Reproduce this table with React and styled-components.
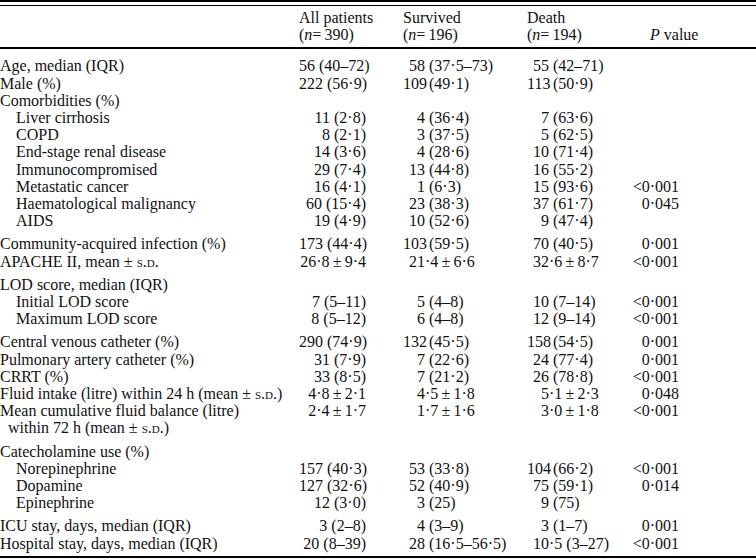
import React from 'react';
import styled, { createGlobalStyle } from 'styled-components';

const GlobalStyle = createGlobalStyle`
  html, body {
    margin: 0;
    padding: 0;
    background: #fff;
  }
  body {
    font-family: 'Liberation Serif', 'Times New Roman', serif;
    color: #111;
  }
`;

const Table = styled.div`
  width: 756px;
  font-size: 16px;
  line-height: 17.2px;
`;

const ThickRule = styled.div`
  height: ${({ $h }) => $h || 2}px;
  background: #000;
`;

const ThinRule = styled.div`
  height: 1px;
  margin-top: 3px;
  background: #000;
`;

const Row = styled.div`
  display: grid;
  grid-template-columns: 299px 67px 161px 102px 61px;
  white-space: nowrap;
`;

const HeaderRow = styled(Row)`
  padding: 3px 0 4px;
`;

const Body = styled.div`
  padding: 8px 0 4.5px;
`;

const Group = styled.div`
  & + & {
    margin-top: 6px;
  }
`;

const Label = styled.div`
  padding-left: ${({ $indent }) => $indent || 0}px;
`;

const HeadCell = styled.div`
  padding-left: ${({ $pad }) => $pad || 0}px;
`;

const RightCell = styled.div`
  text-align: right;
  padding-right: ${({ $pad }) => $pad || 0}px;
`;

const AlignCell = styled.div`
  padding-left: ${({ $pad }) => $pad || 0}px;
`;

const Lead = styled.span`
  display: inline-block;
  width: 22px;
  text-align: right;
`;

const Sc = styled.span`
  font-variant: small-caps;
`;

const It = styled.i`
  font-style: italic;
`;

const txt = (s) => {
  if (!s.includes('s.d.')) return s;
  const parts = s.split('s.d.');
  return parts.map((p, i) => (
    <React.Fragment key={i}>
      {p}
      {i < parts.length - 1 && <Sc>s.d.</Sc>}
    </React.Fragment>
  ));
};

const Aligned = ({ value, pad }) => {
  const m = value.match(/^(\d*)(.*)$/);
  return (
    <AlignCell $pad={pad}>
      <Lead>{m[1]}</Lead>
      {m[2]}
    </AlignCell>
  );
};

// tight plus-minus for the figures
const PM = '\u2009±\u2009';

const groups = [
  [
    ['Age, median (IQR)', 0, '56 (40–72)', '58 (37·5–73)', '55 (42–71)', ''],
    ['Male (%)', 0, '222 (56·9)', '109 (49·1)', '113 (50·9)', ''],
    ['Comorbidities (%)', 0, '', '', '', ''],
    ['Liver cirrhosis', 16, '11 (2·8)', '4 (36·4)', '7 (63·6)', ''],
    ['COPD', 16, '8 (2·1)', '3 (37·5)', '5 (62·5)', ''],
    ['End-stage renal disease', 16, '14 (3·6)', '4 (28·6)', '10 (71·4)', ''],
    ['Immunocompromised', 16, '29 (7·4)', '13 (44·8)', '16 (55·2)', ''],
    ['Metastatic cancer', 16, '16 (4·1)', '1 (6·3)', '15 (93·6)', '<0·001'],
    ['Haematological malignancy', 16, '60 (15·4)', '23 (38·3)', '37 (61·7)', '0·045'],
    ['AIDS', 16, '19 (4·9)', '10 (52·6)', '9 (47·4)', ''],
  ],
  [
    ['Community-acquired infection (%)', 0, '173 (44·4)', '103 (59·5)', '70 (40·5)', '0·001'],
    ['APACHE II, mean ± s.d.', 0, `26·8${PM}9·4`, `21·4${PM}6·6`, `32·6${PM}8·7`, '<0·001'],
  ],
  [
    ['LOD score, median (IQR)', 0, '', '', '', ''],
    ['Initial LOD score', 16, '7 (5–11)', '5 (4–8)', '10 (7–14)', '<0·001'],
    ['Maximum LOD score', 16, '8 (5–12)', '6 (4–8)', '12 (9–14)', '<0·001'],
  ],
  [
    ['Central venous catheter (%)', 0, '290 (74·9)', '132 (45·5)', '158 (54·5)', '0·001'],
    ['Pulmonary artery catheter (%)', 0, '31 (7·9)', '7 (22·6)', '24 (77·4)', '0·001'],
    ['CRRT (%)', 0, '33 (8·5)', '7 (21·2)', '26 (78·8)', '<0·001'],
    ['Fluid intake (litre) within 24 h (mean ± s.d.)', 0, `4·8${PM}2·1`, `4·5${PM}1·8`, `5·1${PM}2·3`, '0·048'],
    ['Mean cumulative fluid balance (litre)', 0, `2·4${PM}1·7`, `1·7${PM}1·6`, `3·0${PM}1·8`, '<0·001'],
    ['within 72 h (mean ± s.d.)', 8, '', '', '', ''],
  ],
  [
    ['Catecholamine use (%)', 0, '', '', '', ''],
    ['Norepinephrine', 16, '157 (40·3)', '53 (33·8)', '104 (66·2)', '<0·001'],
    ['Dopamine', 16, '127 (32·6)', '52 (40·9)', '75 (59·1)', '0·014'],
    ['Epinephrine', 16, '12 (3·0)', '3 (25)', '9 (75)', ''],
  ],
  [
    ['ICU stay, days, median (IQR)', 0, '3 (2–8)', '4 (3–9)', '3 (1–7)', '0·001'],
    ['Hospital stay, days, median (IQR)', 0, '20 (8–39)', '28 (16·5–56·5)', '10·5 (3–27)', '<0·001'],
  ],
];

const App = () => (
  <Table>
    <GlobalStyle />
    <ThickRule $h={2} />
    <ThinRule />
    <HeaderRow>
      <div />
      <HeadCell>
        All patients
        <br />(<It>n</It>=&thinsp;390)
      </HeadCell>
      <HeadCell $pad={37}>
        Survived
        <br />(<It>n</It>=&thinsp;196)
      </HeadCell>
      <HeadCell>
        Death
        <br />(<It>n</It>=&thinsp;194)
      </HeadCell>
      <HeadCell $pad={21}>
        <br />
        <It>P</It> value
      </HeadCell>
    </HeaderRow>
    <ThickRule $h={2} />
    <Body>
      {groups.map((g, gi) => (
        <Group key={gi}>
          {g.map(([label, indent, all, sur, dea, p]) => (
            <Row key={label}>
              <Label $indent={indent}>{txt(label)}</Label>
              <RightCell>{all}</RightCell>
              {sur ? <Aligned value={sur} pad={37} /> : <div />}
              {dea ? <Aligned value={dea} /> : <div />}
              <RightCell $pad={11}>{p}</RightCell>
            </Row>
          ))}
        </Group>
      ))}
    </Body>
    <ThickRule $h={1.5} />
  </Table>
);

export default App;
